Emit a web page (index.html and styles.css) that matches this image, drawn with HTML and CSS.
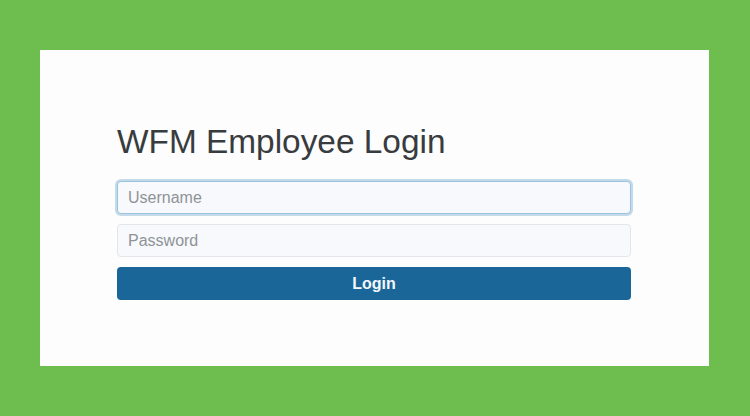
FILE: index.html
```html
<!DOCTYPE html>
<html lang="en">
<head>
    <meta charset="UTF-8">
    <meta name="viewport" content="width=device-width, initial-scale=1.0">
    <title>WFM Employee Login</title>
    <link rel="stylesheet" href="styles.css">
</head>
<body>
    <div class="panel">
        <form class="login" id="loginForm">
            <h1>WFM Employee Login</h1>
            <input type="text" class="field focused" placeholder="Username">
            <input type="password" class="field" placeholder="Password">
            <button type="button">Login</button>
        </form>
    </div>
</body>
</html>
```

FILE: styles.css
```css
body { margin: 0; background-color: #6dbd4f; font-family: "Liberation Sans", Arial, sans-serif; color: #333; }
.panel { margin: 50px 0 0 40px; width: 669px; height: 316px; background-color: #fdfdfd; box-sizing: border-box; padding: 72px 0 0 77px; }
.login { width: 514px; display: flex; flex-direction: column; }
h1 { margin: 0 0 19px; font-size: 33.4px; font-weight: normal; line-height: 40px; color: #383c3e; }
.field { height: 33px; box-sizing: border-box; padding: 6px 10px; margin-bottom: 10px; border: 1px solid #e3e6ea; border-radius: 4px; background-color: #f7f9fc; font-family: inherit; font-size: 16px; color: #555; }
.field::placeholder { color: #8f9397; }
.field.focused { border-color: #9cc3dd; box-shadow: 0 0 0 2px #c3dae9; }
button { height: 33px; border: none; border-radius: 4px; background-color: #1a6699; color: #f4f8fb; font-family: inherit; font-size: 16px; font-weight: bold; cursor: pointer; }
```
